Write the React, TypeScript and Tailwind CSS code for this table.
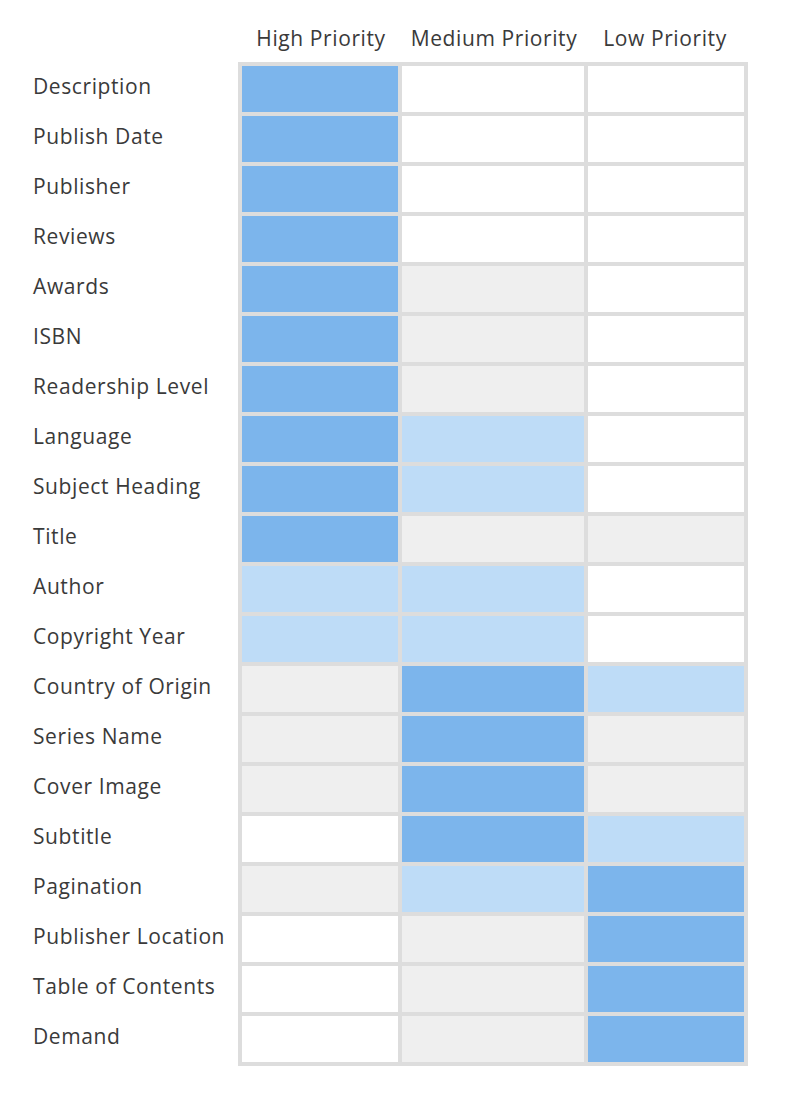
const D = 'bg-[#7cb5ec]';
const L = 'bg-[#bedcf7]';
const G = 'bg-[#efefef]';
const W = 'bg-white';

const rows: [string, string, string, string][] = [
  ['Description', D, W, W],
  ['Publish Date', D, W, W],
  ['Publisher', D, W, W],
  ['Reviews', D, W, W],
  ['Awards', D, G, W],
  ['ISBN', D, G, W],
  ['Readership Level', D, G, W],
  ['Language', D, L, W],
  ['Subject Heading', D, L, W],
  ['Title', D, G, G],
  ['Author', L, L, W],
  ['Copyright Year', L, L, W],
  ['Country of Origin', G, D, L],
  ['Series Name', G, D, G],
  ['Cover Image', G, D, G],
  ['Subtitle', W, D, L],
  ['Pagination', G, L, D],
  ['Publisher Location', W, G, D],
  ['Table of Contents', W, G, D],
  ['Demand', W, G, D],
];

const App = () => {
  return (
    <div className="w-[786px] h-[1100px] bg-white text-[#3a3a3a] font-['Open_Sans','Noto_Sans',sans-serif] text-[21px] tracking-[0.6px]">
      {/* column headers */}
      <div className="flex pl-[241px] h-[62px] items-center pt-[16px]">
        <div className="w-[160px] text-center whitespace-nowrap">High Priority</div>
        <div className="w-[186px] text-center whitespace-nowrap">Medium Priority</div>
        <div className="w-[156px] text-center whitespace-nowrap">Low Priority</div>
      </div>

      <div className="flex">
        {/* row labels */}
        <div className="w-[238px] pl-[33px]">
          {rows.map(([label]) => (
            <div key={label} className="h-[50px] flex items-center whitespace-nowrap">
              {label}
            </div>
          ))}
        </div>

        {/* matrix */}
        <div className="bg-[#dddddd] p-[4px] grid grid-cols-[156px_182px_156px] gap-[4px] self-start">
          {rows.map(([label, h, m, l]) => (
            <div key={label} className="contents">
              <div className={`h-[46px] ${h}`} />
              <div className={`h-[46px] ${m}`} />
              <div className={`h-[46px] ${l}`} />
            </div>
          ))}
        </div>
      </div>
    </div>
  );
};

export default App;
